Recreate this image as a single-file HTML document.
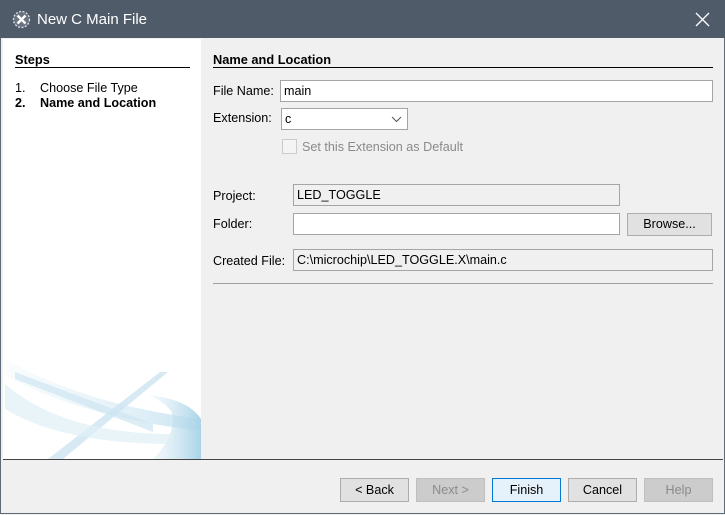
<!DOCTYPE html>
<html><head><style>
body{margin:0;width:725px;height:515px;overflow:hidden;font-family:"Liberation Sans",sans-serif;font-size:12.6px;color:#000;background:#f0f0f0;position:relative}
.a{position:absolute}
.tb{left:0;top:0;width:725px;height:38px;background:#4f5b69}
.frame{left:0;top:38px;width:723px;height:475px;border:1px solid #5f6a78;border-top:none;background:#f0f0f0}
.inp{position:absolute;background:#fff;border:1px solid #a5a5a5;box-sizing:border-box;padding:3px 3px;font-size:12.6px}
.dis{background:#f0f0f0}
.btn{position:absolute;top:478px;height:24px;width:69px;box-sizing:border-box;border:1px solid #adadad;background:#e1e1e1;text-align:center;line-height:22px;font-size:12.6px}
</style></head><body>
<div class="a tb"></div>
<svg class="a" style="left:12px;top:10px" width="19" height="19" viewBox="0 0 19 19"><circle cx="9.5" cy="9.5" r="8" fill="#6a7480" stroke="#dde" stroke-width="1.3" stroke-dasharray="2 1.5"/><path d="M5.5 5.5L13.5 13.5M13.5 5.5L5.5 13.5" stroke="#fff" stroke-width="2.4"/></svg>
<div class="a" style="left:37px;top:11px;color:#fff;font-size:15px">New C Main File</div>
<svg class="a" style="left:695px;top:12px" width="15" height="15"><path d="M1 1L14 14M14 1L1 14" stroke="#fff" stroke-width="1.3"/></svg>
<div class="a frame"></div>
<div class="a" style="left:3px;top:39px;width:198px;height:420px;background:#fff;overflow:hidden">
<svg width="198" height="420" style="position:absolute;left:0;top:0">
<defs><linearGradient id="g" x1="0" x2="1"><stop offset="0" stop-color="#d5e9f3" stop-opacity=".2"/><stop offset="1" stop-color="#a9d4e8"/></linearGradient></defs>
<path d="M2 320 Q80 365 198 380 L198 392 Q80 378 2 337Z" fill="url(#g)" opacity=".6"/>
<path d="M12 333 L150 385 L150 393 L12 340Z" fill="#cfe6f2" opacity=".7"/>
<path d="M45 420 L157 333 L165 333 L60 420Z" fill="#cde5f1" opacity=".8"/>
<path d="M145 356 Q185 360 198 380 L198 420 L150 420 Q175 395 168 372 Q160 362 145 356Z" fill="url(#g)"/>
<path d="M2 345 Q60 395 170 395 L170 405 Q60 405 2 370Z" fill="#e0eff7" opacity=".7"/>
</svg></div>
<div class="a" style="left:3px;top:459px;width:720px;border-top:1px solid #444"></div>
<div class="a" style="left:15px;top:52px;font-weight:bold;font-size:12.8px">Steps</div>
<div class="a" style="left:15px;top:67px;width:175px;border-top:1px solid #000"></div>
<div class="a" style="left:15px;top:81px">1.</div><div class="a" style="left:40px;top:81px">Choose File Type</div>
<div class="a" style="left:15px;top:96px;font-weight:bold">2.</div><div class="a" style="left:40px;top:96px;font-weight:bold">Name and Location</div>
<div class="a" style="left:213px;top:52px;font-weight:bold;font-size:12.8px">Name and Location</div>
<div class="a" style="left:213px;top:67px;width:500px;border-top:1px solid #000"></div>
<div class="a" style="left:213px;top:84px">File Name:</div>
<div class="inp" style="left:280px;top:80px;width:433px;height:22px">main</div>
<div class="a" style="left:213px;top:111px">Extension:</div>
<div class="inp" style="left:281px;top:108px;width:127px;height:22px">c</div>
<svg class="a" style="left:391px;top:115px" width="11" height="8"><path d="M1 2L5.5 6.5L10 2" fill="none" stroke="#555" stroke-width="1"/></svg>
<div class="a" style="left:282px;top:139px;width:15px;height:15px;border:1px solid #ccc;box-sizing:border-box;background:#f4f4f4"></div>
<div class="a" style="left:302px;top:140px;color:#8a8a8a">Set this Extension as Default</div>
<div class="a" style="left:213px;top:189px">Project:</div>
<div class="inp dis" style="left:293px;top:184px;width:327px;height:22px">LED_TOGGLE</div>
<div class="a" style="left:213px;top:217px">Folder:</div>
<div class="inp" style="left:293px;top:213px;width:327px;height:22px"></div>
<div class="a" style="left:627px;top:213px;width:85px;height:23px;border:1px solid #adadad;box-sizing:border-box;background:#e1e1e1;text-align:center;line-height:21px">Browse...</div>
<div class="a" style="left:213px;top:254px">Created File:</div>
<div class="inp dis" style="left:293px;top:249px;width:420px;height:22px">C:\microchip\LED_TOGGLE.X\main.c</div>
<div class="a" style="left:213px;top:283px;width:500px;border-top:1px solid #a0a0a0"></div>
<div class="btn" style="left:340px">&lt; Back</div>
<div class="btn" style="left:416px;background:#ccc;border-color:#bfbfbf;color:#8a8a8a">Next &gt;</div>
<div class="btn" style="left:492px;background:#e5f1fb;border-color:#0078d7">Finish</div>
<div class="btn" style="left:568px">Cancel</div>
<div class="btn" style="left:644px;background:#ccc;border-color:#bfbfbf;color:#8a8a8a">Help</div>
</body></html>
